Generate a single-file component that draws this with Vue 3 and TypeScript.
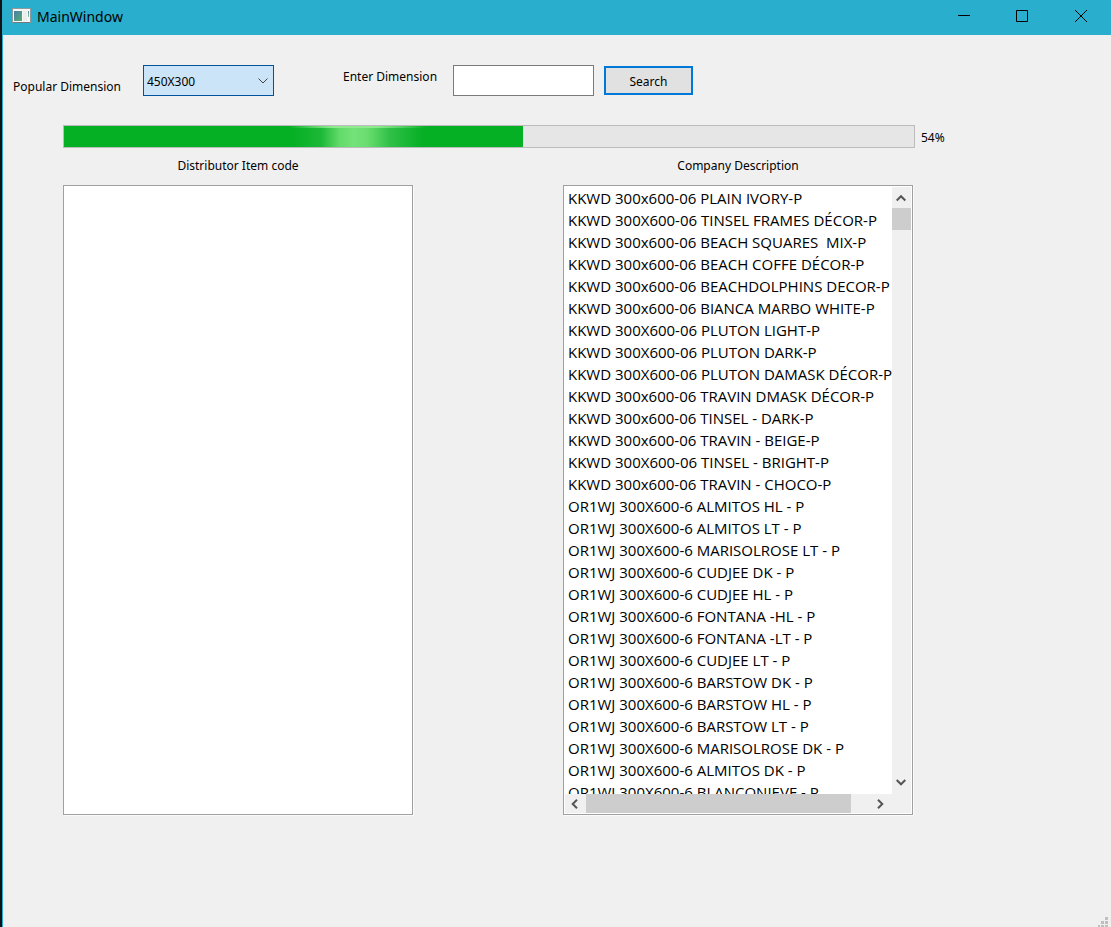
<script setup lang="ts">
import { ref } from 'vue'

const dimension = ref('450X300')
const dimensions = ['450X300', '300X600', '600X600']
const query = ref('')
const progress = ref(54)
const descriptions: string[] = [
  'KKWD 300x600-06 PLAIN IVORY-P',
  'KKWD 300X600-06 TINSEL FRAMES DÉCOR-P',
  'KKWD 300x600-06 BEACH SQUARES  MIX-P',
  'KKWD 300x600-06 BEACH COFFE DÉCOR-P',
  'KKWD 300x600-06 BEACHDOLPHINS DECOR-P',
  'KKWD 300x600-06 BIANCA MARBO WHITE-P',
  'KKWD 300X600-06 PLUTON LIGHT-P',
  'KKWD 300X600-06 PLUTON DARK-P',
  'KKWD 300X600-06 PLUTON DAMASK DÉCOR-P',
  'KKWD 300x600-06 TRAVIN DMASK DÉCOR-P',
  'KKWD 300x600-06 TINSEL - DARK-P',
  'KKWD 300x600-06 TRAVIN - BEIGE-P',
  'KKWD 300X600-06 TINSEL - BRIGHT-P',
  'KKWD 300x600-06 TRAVIN - CHOCO-P',
  'OR1WJ 300X600-6 ALMITOS HL - P',
  'OR1WJ 300X600-6 ALMITOS LT - P',
  'OR1WJ 300X600-6 MARISOLROSE LT - P',
  'OR1WJ 300X600-6 CUDJEE DK - P',
  'OR1WJ 300X600-6 CUDJEE HL - P',
  'OR1WJ 300X600-6 FONTANA -HL - P',
  'OR1WJ 300X600-6 FONTANA -LT - P',
  'OR1WJ 300X600-6 CUDJEE LT - P',
  'OR1WJ 300X600-6 BARSTOW DK - P',
  'OR1WJ 300X600-6 BARSTOW HL - P',
  'OR1WJ 300X600-6 BARSTOW LT - P',
  'OR1WJ 300X600-6 MARISOLROSE DK - P',
  'OR1WJ 300X600-6 ALMITOS DK - P',
  'OR1WJ 300X600-6 BLANCONIEVE - P',
]
</script>

<template>
  <div class="window">
    <header class="titlebar">
      <svg class="app-icon" width="20" height="16" viewBox="0 0 20 16" aria-hidden="true">
        <defs>
          <linearGradient id="pane" x1="0" y1="0" x2="1" y2="1">
            <stop offset="0" stop-color="#4a7fb0" />
            <stop offset="1" stop-color="#55ad6c" />
          </linearGradient>
          <linearGradient id="strip" x1="0" y1="0" x2="0" y2="1">
            <stop offset="0" stop-color="#4a8fb0" />
            <stop offset="1" stop-color="#8cc99a" />
          </linearGradient>
        </defs>
        <rect x="0.5" y="0.5" width="18" height="14" fill="#f7f7f7" stroke="#8f9a9c" />
        <rect x="1" y="14" width="17" height="1" fill="#6f7a7c" />
        <rect x="2" y="3" width="8" height="10" fill="url(#pane)" />
        <rect x="11" y="3" width="4" height="10" fill="#eceeee" />
        <rect x="16" y="3" width="1" height="6" fill="url(#strip)" />
      </svg>
      <h1>MainWindow</h1>
      <div class="window-buttons">
        <button type="button" aria-label="Minimize">
          <svg width="12" height="12" viewBox="0 0 12 12"><path d="M0 5.5H12" /></svg>
        </button>
        <button type="button" aria-label="Maximize">
          <svg width="12" height="12" viewBox="0 0 12 12"><path d="M.5 .5H11.5V11.5H.5Z" /></svg>
        </button>
        <button type="button" aria-label="Close">
          <svg width="14" height="12" viewBox="0 0 14 12"><path d="M2 0L14 12M14 0L2 12" /></svg>
        </button>
      </div>
    </header>

    <main>
      <form class="toolbar" @submit.prevent>
        <label class="popular-label" for="popular">Popular Dimension</label>
        <div class="combo">
          <select id="popular" v-model="dimension">
            <option v-for="d in dimensions" :key="d">{{ d }}</option>
          </select>
          <svg width="10" height="6" viewBox="0 0 10 6" aria-hidden="true"><path d="M.5 .5L5 5L9.500 .5" /></svg>
        </div>
        <label class="enter-label" for="dimension">Enter Dimension</label>
        <input id="dimension" v-model="query" type="text" />
        <button class="search" type="submit">Search</button>
      </form>

      <div class="progress-row">
        <div class="progress" role="progressbar" aria-label="Progress" :aria-valuenow="progress" aria-valuemin="0" aria-valuemax="100">
          <div class="progress-fill" :style="{ width: progress + '%' }"></div>
        </div>
        <span>{{ progress }}%</span>
      </div>

      <div class="lists">
        <section>
          <h2 id="codes">Distributor Item code</h2>
          <ul class="frame" aria-labelledby="codes"></ul>
        </section>
        <section>
          <h2 id="descriptions">Company Description</h2>
          <div class="frame scroll-frame">
            <ul class="items" aria-labelledby="descriptions">
              <li v-for="item in descriptions" :key="item">{{ item }}</li>
            </ul>
            <div class="bar vertical">
              <button type="button" aria-label="Scroll up">
                <svg width="11" height="8" viewBox="0 0 11 8"><path d="M.7 6.500L5 2.200L9.300 6.500" /></svg>
              </button>
              <div class="track"><div class="thumb"></div></div>
              <button class="down" type="button" aria-label="Scroll down">
                <svg width="11" height="8" viewBox="0 0 11 8"><path d="M.7 2L5 6.300L9.300 2" /></svg>
              </button>
            </div>
            <div class="bar horizontal">
              <button type="button" aria-label="Scroll left">
                <svg width="9" height="10" viewBox="0 0 9 10"><path d="M6 .7L1.700 5L6 9.300" /></svg>
              </button>
              <div class="track"><div class="thumb"></div></div>
              <button class="right" type="button" aria-label="Scroll right">
                <svg width="8" height="10" viewBox="0 0 8 10"><path d="M2 .7L6.300 5L2 9.300" /></svg>
              </button>
            </div>
            <div class="corner"></div>
          </div>
        </section>
      </div>
    </main>
    <svg class="grip" width="11" height="11" viewBox="0 0 11 11" aria-hidden="true">
      <path d="M8 1h3v3h-3zM4 5h3v3h-3zM8 5h3v3h-3zM1 9h2v2h-2zM4 9h3v2h-3zM8 9h3v2h-3z" />
    </svg>
  </div>
</template>

<style>
body {
  margin: 0;
  background: #101418;
}
</style>

<style scoped>
* {
  box-sizing: border-box;
}

.window {
  position: relative;
  display: flex;
  flex-direction: column;
  height: 100vh;
  min-height: 480px;
  margin-left: 2px;
  border-left: 1px solid #2aaecd;
  background: #f0f0f0;
  color: #000;
  font-family: "Noto Sans", "Open Sans", sans-serif;
  font-size: 12px;
  line-height: 16px;
}

button,
input,
select {
  margin: 0;
  border-radius: 0;
  color: inherit;
  font: inherit;
}

h1,
h2,
ul {
  margin: 0;
  padding: 0;
  font-weight: 400;
  list-style: none;
}

/* Title bar */
.titlebar {
  display: flex;
  align-items: center;
  flex: none;
  height: 35px;
  padding: 0 2px 0 9px;
  background: #2aaecd;
}

.app-icon {
  margin-bottom: 3px;
}

h1 {
  margin-left: 5px;
  padding-bottom: 2px;
  font-size: 14px;
  line-height: 20px;
}

.window-buttons {
  display: flex;
  margin-left: auto;
}

.window-buttons button {
  display: grid;
  place-items: center;
  width: 58px;
  height: 35px;
  padding: 0 0 3px;
  border: 0;
  background: transparent;
}

.window-buttons path {
  fill: none;
  stroke: #000;
}

/* Client area */
main {
  display: flex;
  flex: 1;
  flex-direction: column;
  min-height: 0;
  padding: 30px 0 112px;
}

.toolbar {
  display: flex;
  align-items: center;
  flex: none;
  padding-left: 10px;
}

.popular-label {
  width: 130px;
  padding-top: 12px;
}

.enter-label {
  width: 110px;
  margin-left: 69px;
  padding-bottom: 8px;
}

.combo {
  display: grid;
  align-items: center;
  width: 131px;
}

.combo select,
.combo svg {
  grid-area: 1 / 1;
}

.combo select {
  width: 100%;
  height: 31px;
  padding: 2px 20px 0 3px;
  border: 1px solid #005499;
  outline: 0;
  appearance: none;
  background: #cce4f7;
}

.combo svg {
  justify-self: end;
  margin-right: 6px;
  fill: none;
  stroke: #444;
  pointer-events: none;
}

.toolbar input {
  width: 141px;
  height: 31px;
  padding: 0 4px;
  border: 1px solid #7a7a7a;
  background: #fff;
}

.search {
  width: 89px;
  height: 29px;
  margin-left: 10px;
  padding: 2px 0 0;
  border: 2px solid #0078d7;
  background: #e1e1e1;
}

.progress-row {
  display: flex;
  align-items: center;
  flex: none;
  gap: 6px;
  margin-top: 29px;
  padding-left: 60px;
}

.progress-row span {
  width: 190px;
  padding-top: 2px;
}

.progress {
  flex: 1;
  height: 23px;
  border: 1px solid #bcbcbc;
  background: #e6e6e6;
}

.progress-fill {
  height: 100%;
  background:
    linear-gradient(90deg, transparent 49%, #90ea90 59%, #90ea90 67%, transparent 79%) top / 100% 2px no-repeat,
    linear-gradient(90deg, #06b025 50%, #1cb837 56%, #62da69 60%, #74e27a 63%, #6ade70 66%, #30c048 71%, #06b025 78%);
}

.lists {
  display: grid;
  flex: 1;
  grid-template-columns: 1fr 1fr;
  gap: 150px;
  min-height: 0;
  padding: 10px 198px 0 60px;
}

section {
  display: flex;
  flex-direction: column;
  min-width: 0;
  min-height: 0;
}

h2 {
  font-size: 12px;
  line-height: 16px;
  text-align: center;
}

.frame {
  flex: 1;
  min-height: 0;
  margin-top: 11px;
  padding: 1px;
  border: 1px solid #a0a0a0;
  background: #fff;
  box-shadow: 1px 1px #fbfbfb;
}

.scroll-frame {
  display: grid;
  grid-template-rows: minmax(0, 1fr) 19px;
  grid-template-columns: minmax(0, 1fr) 19px;
}

.items {
  overflow: hidden;
  padding-left: 3px;
  font-family: "Open Sans", "Noto Sans", sans-serif;
  font-size: 15px;
  line-height: 22px;
  white-space: pre;
}

.bar {
  display: flex;
  background: #f0f0f0;
}

.vertical {
  flex-direction: column;
}

.bar button {
  display: grid;
  place-items: center;
  flex: none;
  width: 21px;
  height: 19px;
  padding: 0;
  border: 0;
  background: transparent;
}

.vertical button {
  width: 19px;
  height: 21px;
}

.bar .down {
  padding-bottom: 4px;
}

.bar .right {
  padding-right: 4px;
}

.bar path {
  fill: none;
  stroke: #555;
  stroke-width: 2;
}

.track {
  display: flex;
  flex: 1;
}

.vertical .track {
  flex-direction: column;
}

.thumb {
  background: #cdcdcd;
}

.vertical .thumb {
  height: 22px;
}

.horizontal .thumb {
  width: 93%;
}

.corner {
  background: #f0f0f0;
}

.grip {
  position: absolute;
  right: 3px;
  bottom: 0;
  fill: #bfbfbf;
}
</style>
